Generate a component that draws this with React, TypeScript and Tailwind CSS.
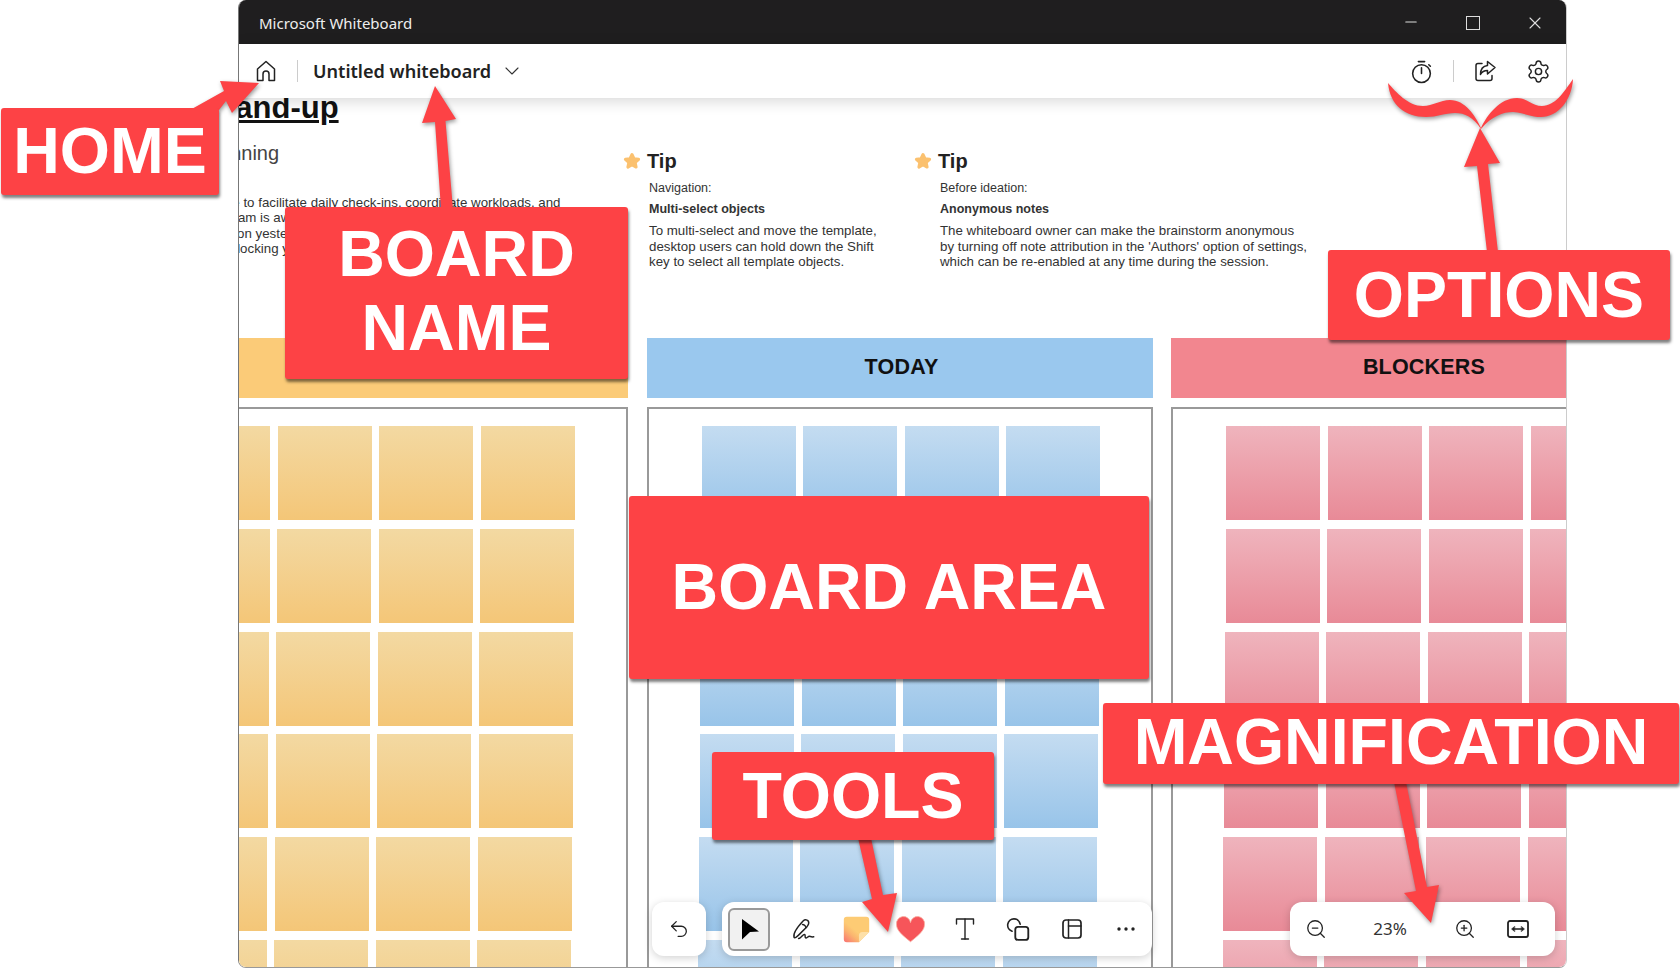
import React from 'react';
import { ChevronDown, Minus, Settings, Undo2, X, ZoomIn, ZoomOut } from 'lucide-react';

// Row offsets of the sticky note grid, the template is slightly skewed
const noteRows = [
  { top: 0, left: 0 },
  { top: 9, left: -0.5 },
  { top: 9, left: -1.5 },
  { top: 8, left: -2 },
  { top: 9, left: -3 },
  { top: 9, left: -3.5 },
];

const columns = [
  { title: '', header: 'bg-[#fbcb78]', pad: 'pl-[52px]', titlePad: '', note: 'from-[#f3d9a2] to-[#f4c677]' },
  { title: 'TODAY', header: 'bg-[#9ac8ee]', pad: 'pl-[53px]', titlePad: 'pl-[4px]', note: 'from-[#c4dcf1] to-[#98c4e9]' },
  { title: 'BLOCKERS', header: 'bg-[#f2868f]', pad: 'pl-[53px]', titlePad: '', note: 'from-[#efb4bd] to-[#e88a97]' },
];

const tips = [
  {
    width: 'w-[291px]',
    label: 'Navigation:',
    title: 'Multi-select objects',
    lines: ['To multi-select and move the template,', 'desktop users can hold down the Shift', 'key to select all template objects.'],
  },
  {
    width: 'w-[400px]',
    label: 'Before ideation:',
    title: 'Anonymous notes',
    lines: [
      'The whiteboard owner can make the brainstorm anonymous',
      "by turning off note attribution in the 'Authors' option of settings,",
      'which can be re-enabled at any time during the session.',
    ],
  },
];

function StarIcon() {
  return (
    <svg width="20" height="20" viewBox="0 0 20 20" className="shrink-0">
      <path
        d="M10 3.500l2 4.200 4.600.6-3.400 3.200.9 4.600L10 13.800l-4.100 2.300.9-4.600-3.400-3.200 4.600-.6Z"
        fill="#fbc16f"
        stroke="#fbc16f"
        strokeWidth="3"
        strokeLinejoin="round"
      />
    </svg>
  );
}

function Tip({ tip }: { tip: (typeof tips)[number] }) {
  return (
    <div className={`${tip.width} shrink-0 pt-[51px]`}>
      <div className="flex items-center gap-[5px] text-[20px] leading-[24px] font-bold text-[#222]">
        <StarIcon />
        <span>Tip</span>
      </div>
      <div className="ml-[27px] text-[12.5px] text-[#333]">
        <div className="mt-[7px] leading-[16px]">{tip.label}</div>
        <div className="mt-[5px] leading-[16px] font-bold">{tip.title}</div>
        <div className="mt-[6px] text-[13.3px] leading-[15.5px] whitespace-nowrap">
          {tip.lines.map((line) => (
            <div key={line}>{line}</div>
          ))}
        </div>
      </div>
    </div>
  );
}

function NoteColumn({ col }: { col: (typeof columns)[number] }) {
  return (
    <div className="w-[506px] shrink-0">
      <div className={`${col.header} ${col.titlePad} flex h-[60px] items-center justify-center pb-[2px] text-[21.5px] font-bold tracking-[0.2px] text-[#111]`}>
        {col.title}
      </div>
      <div className={`${col.pad} mt-[9px] h-[600px] border-2 border-[#999] pt-[17px]`}>
        {noteRows.map((row, i) => (
          <div key={i} className="flex gap-[7.5px]" style={{ marginTop: row.top, marginLeft: row.left }}>
            {[0, 1, 2, 3].map((n) => (
              <div key={n} className={`${col.note} h-[94px] w-[94px] shrink-0 bg-linear-to-b`} />
            ))}
          </div>
        ))}
      </div>
    </div>
  );
}

function ToolIcon({ children }: { children: React.ReactNode }) {
  return <div className="flex h-[54px] w-[53.9px] shrink-0 items-center justify-center">{children}</div>;
}

function Toolbars() {
  const stroke = { fill: 'none', stroke: '#222', strokeWidth: 1.5, strokeLinecap: 'round', strokeLinejoin: 'round' } as const;
  return (
    <>
      <div className="absolute bottom-[11px] left-[413px] flex gap-[16px]">
        <div className="flex h-[54px] w-[54px] items-center justify-center rounded-xl bg-white shadow-[0_2px_8px_rgba(0,0,0,0.18)]">
          <Undo2 size={22} strokeWidth={1.4} color="#222" />
        </div>
        <div className="flex h-[54px] w-[430px] rounded-xl bg-white shadow-[0_2px_8px_rgba(0,0,0,0.18)]">
          <ToolIcon>
            <div className="flex h-[43px] w-[42px] items-center justify-center rounded-md border-2 border-[#999] bg-[#f1f1f1]">
              <svg width="22" height="24" viewBox="0 0 22 24">
                <path d="M4 2l17 12.500-9 .5-8 7.500Z" fill="#000" />
              </svg>
            </div>
          </ToolIcon>
          <ToolIcon>
            <svg width="27" height="27" viewBox="0 0 24 24" {...stroke} strokeWidth={1.3}>
              <path d="M4.500 19C3.500 16 6 11.500 12.500 4.500c2-2 5.500-1 5 2 0 1-1 2-1.500 3l-7.500 7.500c-1.500 1.500-3.500 3-4 2Z" />
              <path d="M12 7.500c1.500 0 3 1.500 3 3" />
              <path d="M8.500 20c2.500 0 4-4.500 5.500-3.500 1 .7-.5 2.500 1 3 1.200.4 2-1.500 3-1.500s1.500 1 4 .5" />
            </svg>
          </ToolIcon>
          <ToolIcon>
            <svg width="29" height="29" viewBox="0 0 24 24">
              <defs>
                <linearGradient id="noteFill" x1="0" y1="1" x2="0.6" y2="0.3">
                  <stop offset="0" stopColor="#f96f72" />
                  <stop offset="0.45" stopColor="#fbb46f" />
                  <stop offset="0.7" stopColor="#fdcb74" />
                </linearGradient>
              </defs>
              <path d="M1.500 4a2.500 2.500 0 0 1 2.500-2.500h16a2.500 2.500 0 0 1 2.500 2.500v10l-8.500 8.500H4A2.500 2.500 0 0 1 1.500 20Z" fill="url(#noteFill)" />
              <path d="M14 22.500l8.500-8.500H17a3 3 0 0 0-3 3Z" fill="#fde0a8" />
            </svg>
          </ToolIcon>
          <ToolIcon>
            <svg width="31" height="28" viewBox="0 0 24 22">
              <path d="M12 21C5 15.500 1 12 1 7.500a5.500 5.500 0 0 1 11-1.500 5.500 5.500 0 0 1 11 1.500C23 12 19 15.500 12 21Z" fill="#f6555a" stroke="#f9b0a0" strokeWidth="0.6" />
            </svg>
          </ToolIcon>
          <ToolIcon>
            <svg width="24" height="26" viewBox="0 0 24 26" {...stroke} strokeWidth={1.4}>
              <path d="M3.500 8V3h17v5" />
              <path d="M12 3v20" />
              <path d="M8.500 23h7" />
            </svg>
          </ToolIcon>
          <ToolIcon>
            <svg width="26" height="26" viewBox="0 0 24 24" {...stroke}>
              <path d="M14 7.500A5.800 5.800 0 1 0 6.500 14" />
              <rect x="9.500" y="10" width="12" height="12" rx="2.500" strokeWidth="1.700" />
            </svg>
          </ToolIcon>
          <ToolIcon>
            <svg width="24" height="24" viewBox="0 0 24 24" {...stroke}>
              <rect x="3" y="3" width="18" height="18" rx="3" strokeWidth="1.700" />
              <path d="M8.500 3v18" />
              <path d="M8.500 9H21" />
            </svg>
          </ToolIcon>
          <ToolIcon>
            <svg width="20" height="6" viewBox="0 0 20 6">
              <circle cx="3" cy="3" r="1.700" fill="#222" />
              <circle cx="10" cy="3" r="1.700" fill="#222" />
              <circle cx="17" cy="3" r="1.700" fill="#222" />
            </svg>
          </ToolIcon>
        </div>
      </div>

      <div className="absolute right-[11px] bottom-[11px] flex h-[54px] w-[265px] items-center rounded-xl bg-white shadow-[0_2px_8px_rgba(0,0,0,0.18)]">
        <div className="flex w-[52px] justify-center">
          <ZoomOut size={22} strokeWidth={1.4} color="#222" />
        </div>
        <div className="w-[96px] text-center font-['Noto_Sans',sans-serif] text-[17px] text-[#333]">23%</div>
        <div className="flex w-[53px] justify-center">
          <ZoomIn size={22} strokeWidth={1.4} color="#222" />
        </div>
        <div className="flex w-[54px] justify-center">
          <svg width="24" height="22" viewBox="0 0 24 22" {...stroke} strokeWidth={1.8}>
            <rect x="2" y="3" width="20" height="16" rx="2" />
            <path d="M8.500 11h7" strokeWidth={1.300} />
            <path d="M8.500 8.500L5.500 11l3 2.500Z" fill="#222" strokeWidth={0.5} />
            <path d="M15.500 8.500l3 2.500-3 2.500Z" fill="#222" strokeWidth={0.5} />
          </svg>
        </div>
      </div>
    </>
  );
}

function Label({ className, children }: { className: string; children: React.ReactNode }) {
  return (
    <div className={`${className} absolute flex items-center justify-center rounded-[3px] bg-[#fd4245] text-center text-[64.5px] font-bold text-white shadow-[1px_3px_3px_rgba(0,0,0,0.5)]`}>
      {children}
    </div>
  );
}

function Annotations() {
  return (
    <>
      <svg width="1680" height="968" viewBox="0 0 1680 968" className="pointer-events-none absolute top-0 left-0 drop-shadow-[1px_2px_2px_rgba(0,0,0,0.4)]">
        <g fill="#fd4245">
          <path d="M190 110L224 91L220 81L259 83L232 113L226 101L219 110Z" />
          <path d="M441 209L435 122L422 123L435 86L456 119L445.500 121L453 209Z" />
          <path d="M1487 252L1477 166L1464 167L1480 128L1500 163L1488 164L1498 252Z" />
          <path d="M1388 83C1396 92 1408 106 1423 106C1433 106 1440 100 1450 100C1465 100 1475 115 1481 128C1487 115 1500 98 1517 98C1527 98 1532 106 1542 106C1555 106 1564 92 1573 79C1572 100 1558 117 1541 117C1530 117 1522 112 1513 112C1503 112 1492 116 1481 129C1473 117 1465 113 1455 113C1445 113 1437 117 1426 117C1405 117 1390 105 1388 83Z" />
          <path d="M858 838L872 899L862 902L888 932L897 893L883 895L871 838Z" />
          <path d="M1394 782L1416 891L1404 893L1431 923L1439 885L1427 887L1406 782Z" />
        </g>
      </svg>
      <Label className="top-[108px] left-[1px] h-[87px] w-[218px] leading-none">HOME</Label>
      <Label className="top-[207px] left-[285px] h-[172px] w-[343px] pb-[5px] leading-[74px]">
        BOARD
        <br />
        NAME
      </Label>
      <Label className="top-[250px] left-[1328px] h-[90px] w-[342px] leading-none">OPTIONS</Label>
      <Label className="top-[496px] left-[629px] h-[183px] w-[520px] leading-none">BOARD AREA</Label>
      <Label className="top-[752px] left-[712px] h-[88px] w-[282px] leading-none">TOOLS</Label>
      <Label className="top-[703px] left-[1103px] h-[81px] w-[576px] pb-[2px] leading-none">MAGNIFICATION</Label>
    </>
  );
}

export default function App() {
  return (
    <div className="relative h-[968px] w-[1680px] overflow-hidden bg-white font-['Liberation_Sans',sans-serif]">
      <div className="isolate ml-[238px] flex h-[968px] w-[1329px] flex-col overflow-hidden rounded-lg border-r border-b border-l border-r-[#ccc] border-b-[#999] border-l-[#777]">
        {/* Title bar */}
        <div className="flex h-[44px] shrink-0 items-center bg-[#1f1e1f] pt-[2px] pl-[20px] font-['Noto_Sans',sans-serif] text-[15px] text-[#eee]">
          <span>Microsoft Whiteboard</span>
          <div className="ml-auto flex text-[#ddd]">
            <div className="flex w-[62px] justify-center">
              <Minus size={18} strokeWidth={1.4} />
            </div>
            <div className="flex w-[62px] items-center justify-center">
              <div className="h-[14px] w-[14px] border-[1.5px] border-[#ddd]" />
            </div>
            <div className="flex w-[62px] justify-center">
              <X size={20} strokeWidth={1.3} />
            </div>
          </div>
        </div>

        {/* App toolbar */}
        <div className="relative z-10 flex h-[54px] shrink-0 items-center bg-white pl-[15px] shadow-[0_3px_14px_rgba(0,0,0,0.16)]">
          <svg width="24" height="24" viewBox="0 0 24 24" fill="none" stroke="#222" strokeWidth="1.500" strokeLinejoin="round">
            <path d="M3.500 21.500V10L12 2.500 20.500 10v11.500H15V15a3 3 0 0 0-6 0v6.500Z" />
          </svg>
          <div className="ml-[19px] h-[22px] w-px bg-[#ccc]" />
          <div className="ml-[15px] pt-[2px] font-['Noto_Sans',sans-serif] text-[18.1px] font-semibold text-[#222]">Untitled whiteboard</div>
          <ChevronDown size={24} strokeWidth={1.1} color="#333" className="ml-[9px]" />
          <div className="ml-auto flex items-center pr-[15px]">
            <svg width="25" height="25" viewBox="0 0 24 24" fill="none" stroke="#222" strokeWidth="1.500" strokeLinecap="round">
              <circle cx="12" cy="14" r="8.500" />
              <path d="M12 14V8.500" />
              <path d="M9 2.500h6" />
              <path d="M19 5.500l1.500 1.500" />
            </svg>
            <div className="mx-[19px] h-[22px] w-px bg-[#ccc]" />
            <svg width="24" height="24" viewBox="0 0 24 24" fill="none" stroke="#222" strokeWidth="1.500" strokeLinejoin="round" strokeLinecap="round">
              <path d="M9 4.500H5a2 2 0 0 0-2 2v13a2 2 0 0 0 2 2h12a2 2 0 0 0 2-2v-3" />
              <path d="M14.500 2.500l7.500 6-7.500 6.500v-3.500c-3 0-5.500 1-7 4 0-5 2.500-8.500 7-9Z" />
            </svg>
            <Settings size={25} strokeWidth={1.4} color="#222" className="ml-[29px]" />
          </div>
        </div>

        {/* Board */}
        <div className="relative flex-1 overflow-hidden bg-white">
          <div className="-ml-[117px] w-[1800px]">
            <div className="flex h-[240px]">
              <div className="w-[500px] shrink-0 text-[13.3px] leading-[15.4px] whitespace-nowrap text-[#333]">
                <div className="-mt-[8px] pl-[3px] text-[31px] leading-[36px] font-bold text-[#111] underline">Daily stand-up</div>
                <div className="mt-[15px] pl-[27px] text-[20px] leading-[24px] text-[#444]">Team planning</div>
                <div className="mt-[30px] pl-[15px]">Use this template to facilitate daily check-ins, coordinate workloads, and</div>
                <div className="pl-[5px]">and ensure your team is aware of priorities.</div>
                <div className="pl-[16px]">Report progress on yesterday's work.</div>
                <div className="pl-[25px]">Raise what is blocking you.</div>
              </div>
              {tips.map((tip) => (
                <Tip key={tip.title} tip={tip} />
              ))}
            </div>
            <div className="flex gap-[18.5px]">
              {columns.map((col) => (
                <NoteColumn key={col.header} col={col} />
              ))}
            </div>
          </div>
          <Toolbars />
        </div>
      </div>
      <Annotations />
    </div>
  );
}
